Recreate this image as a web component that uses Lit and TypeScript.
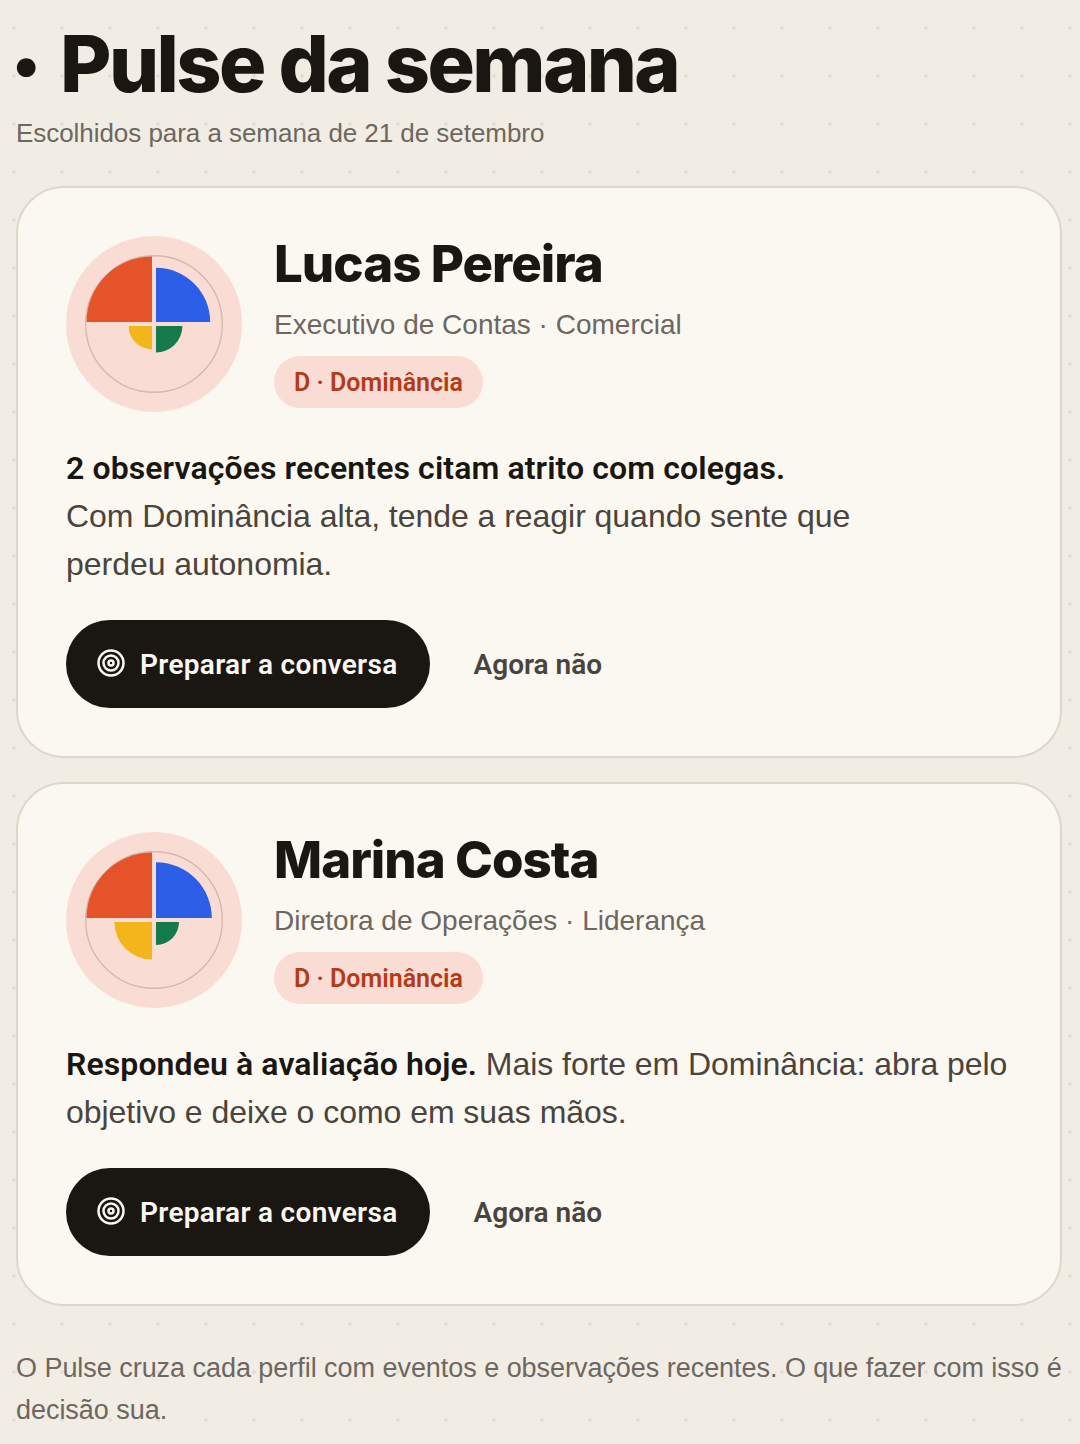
import { LitElement, html, css, svg } from "lit";
import { customElement } from "lit/decorators.js";

interface Person {
  name: string;
  role: string;
  radii: [number, number, number, number];
  body: unknown;
}

const people: Person[] = [
  {
    name: "Lucas Pereira",
    role: "Executivo de Contas · Comercial",
    radii: [65.5, 54.2, 23.4, 26.4],
    body: html`<strong>2 observações recentes citam atrito com colegas.</strong><br />Com Dominância alta, tende a reagir quando sente que<br />perdeu autonomia.`,
  },
  {
    name: "Marina Costa",
    role: "Diretora de Operações · Liderança",
    radii: [65.5, 55.8, 37.6, 23],
    body: html`<strong>Respondeu à avaliação hoje.</strong> Mais forte em Dominância: abra pelo<br />objetivo e deixe o como em suas mãos.`,
  },
];

function avatar(r: Person["radii"]) {
  const [d, i, s, c] = r;
  return svg`<svg class="avatar" viewBox="0 0 176 176" width="176" height="176" aria-hidden="true">
    <circle cx="88" cy="88" r="88" fill="#f9ddd5"></circle>
    <circle cx="88" cy="88" r="68.3" fill="none" stroke="#d6b8ac" stroke-width="1.4"></circle>
    <path d="M86 86V${86 - d}A${d} ${d} 0 0 0 ${86 - d} 86Z" fill="#e5532a"></path>
    <path d="M90 86V${86 - i}A${i} ${i} 0 0 1 ${90 + i} 86Z" fill="#2d5ee8"></path>
    <path d="M86 90V${90 + s}A${s} ${s} 0 0 1 ${86 - s} 90Z" fill="#f2b61c"></path>
    <path d="M90 90V${90 + c}A${c} ${c} 0 0 0 ${90 + c} 90Z" fill="#157a4c"></path>
  </svg>`;
}

const target = html`<svg class="target" viewBox="0 0 24 24" width="30" height="30" fill="none" stroke="currentColor" stroke-width="2" aria-hidden="true">
  <circle cx="12" cy="12" r="10"></circle><circle cx="12" cy="12" r="6"></circle><circle cx="12" cy="12" r="2"></circle>
</svg>`;

@customElement("app-root")
export class AppRoot extends LitElement {
  static styles = css`
    :host {
      display: block;
      box-sizing: border-box;
      min-height: 1444px;
      padding: 16px 18px 14px 16px;
      background-color: #f1ede5;
      background-image: radial-gradient(circle at 14px 28px, #e2ded5 1.7px, transparent 2.1px);
      background-size: 48px 48px;
      font-family: "Liberation Sans", Arial, sans-serif;
      color: #1a1611;
    }
    h1 {
      display: flex;
      margin: 0;
      font-family: Inter, sans-serif;
      font-size: 79px;
      line-height: 94px;
      padding-bottom: 2px;
      font-weight: 800;
      letter-spacing: -0.033em;
      white-space: nowrap;
    }
    .dot {
      width: 48px;
      font-size: 60px;
      font-weight: 700;
      letter-spacing: 0;
      margin-left: -4px;
    }
    .sub {
      margin: 0 0 32px;
      font-size: 26px;
      line-height: 42px;
      letter-spacing: -0.05px;
      color: #6d675f;
    }
    .cards {
      display: flex;
      flex-direction: column;
      gap: 24px;
    }
    .card {
      background: #fbf8f1;
      border: 2px solid #ddd8ca;
      border-radius: 48px;
      padding: 48px;
    }
    .head {
      display: flex;
      gap: 32px;
    }
    .avatar {
      display: block;
      flex: none;
    }
    .info {
      display: flex;
      flex-direction: column;
      align-items: flex-start;
    }
    h2 {
      margin: 0;
      font-family: Inter, sans-serif;
      font-size: 51px;
      line-height: 56px;
      font-weight: 800;
      letter-spacing: -0.019em;
    }
    .role {
      margin: 12px 0 10px;
      font-size: 28px;
      line-height: 42px;
      color: #6d675f;
    }
    .badge {
      display: inline-flex;
      align-items: center;
      height: 52px;
      padding: 0 20px;
      border-radius: 26px;
      background: #f9ddd5;
      color: #b53a17;
      font-family: Roboto, sans-serif;
      font-size: 25px;
      font-weight: 600;
    }
    .body {
      margin: 32px 0;
      font-size: 32px;
      line-height: 48px;
      letter-spacing: -0.04px;
      color: #4a443c;
      white-space: nowrap;
    }
    .body strong {
      font-family: Roboto, sans-serif;
      letter-spacing: 0.1px;
      color: #1a1611;
      font-weight: 600;
    }
    .actions {
      display: flex;
      align-items: center;
      gap: 44px;
    }
    .primary,
    .ghost {
      font-family: Roboto, sans-serif;
      font-size: 28px;
      font-weight: 600;
      letter-spacing: 0.3px;
    }
    .primary {
      display: inline-flex;
      align-items: center;
      gap: 14px;
      height: 88px;
      padding: 0 32px 0 30px;
      border: 0;
      border-radius: 44px;
      background: #1a1611;
      color: #fbf8f1;
    }
    .target {
      display: block;
      margin-top: -3px;
    }
    .ghost {
      padding: 0;
      border: 0;
      background: none;
      color: #4a443c;
      letter-spacing: 0;
    }
    .foot {
      margin: 41px 0 0;
      font-size: 27px;
      line-height: 42px;
      letter-spacing: -0.04px;
      color: #6d675f;
    }
  `;

  render() {
    return html`
      <h1><span class="dot">•</span><span>Pulse da semana</span></h1>
      <p class="sub">Escolhidos para a semana de 21 de setembro</p>
      <div class="cards">
        ${people.map(
          (p) => html`<section class="card">
            <div class="head">
              ${avatar(p.radii)}
              <div class="info">
                <h2>${p.name}</h2>
                <div class="role">${p.role}</div>
                <span class="badge">D · Dominância</span>
              </div>
            </div>
            <p class="body">${p.body}</p>
            <div class="actions">
              <button class="primary">${target}Preparar a conversa</button>
              <button class="ghost">Agora não</button>
            </div>
          </section>`
        )}
      </div>
      <p class="foot">O Pulse cruza cada perfil com eventos e observações recentes. O que fazer com isso é decisão sua.</p>
    `;
  }
}
